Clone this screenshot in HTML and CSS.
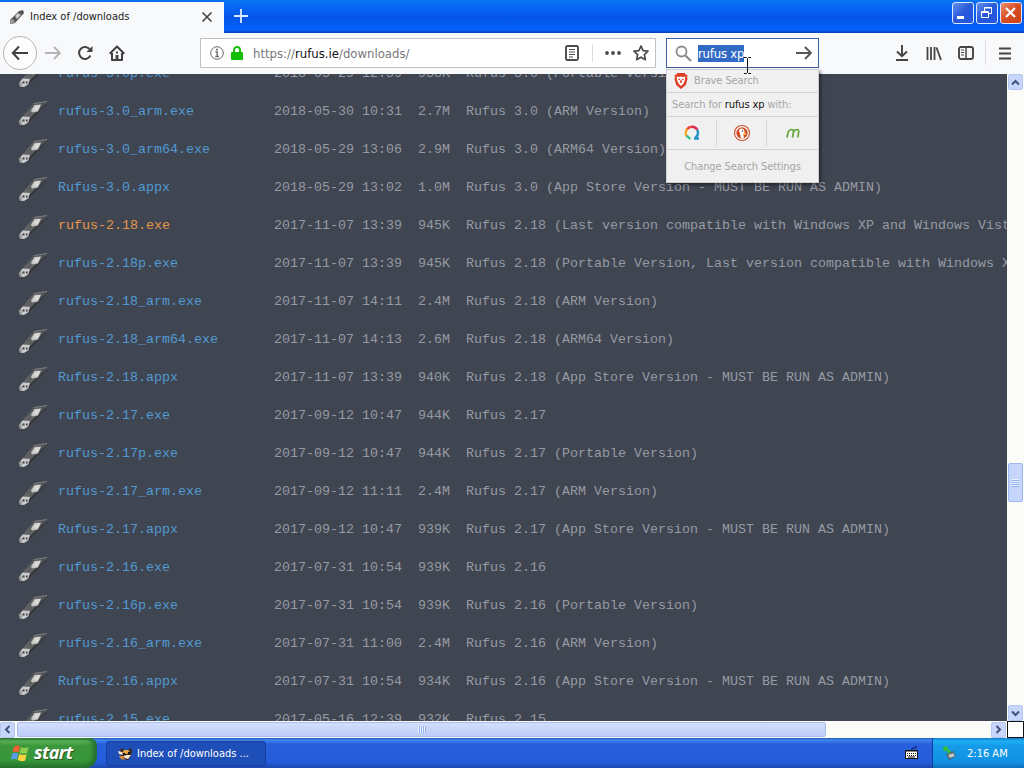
FILE: index.html
```
<!DOCTYPE html>
<html lang="en">
<head>
  <meta charset="UTF-8">
  <meta name="viewport" content="width=device-width, initial-scale=1.0">
  <title>Index of /downloads</title>
  <link rel="stylesheet" href="styles.css">
</head>
<body>
  <svg class="defs" width="0" height="0">
    <defs>
      <linearGradient id="stick" x1="0" y1="1" x2="1" y2="0">
        <stop offset="0" stop-color="#68696b"/>
        <stop offset=".55" stop-color="#5b5c5d"/>
        <stop offset="1" stop-color="#4c4f56"/>
      </linearGradient>
      <symbol id="usb" viewBox="0 0 32 28">
        <path d="M6 17 17 4 30 2.500 29 6 14 21.500 11 24z" fill="url(#stick)"/>
        <path d="M14 21.500 29 6 29.500 4 13 19 11 24z" fill="#34363a"/>
        <path d="M17 4.500 30 2.500" stroke="#7d7e80" fill="none"/>
        <path d="M14 11.500 17.500 6 24 5.500 21 12.500 15 13.500z" fill="#c6c6c3"/>
        <path d="M18 7 23.500 6 21 11 17 11.500z" fill="#dadad6"/>
        <path d="M2 22 5.500 17.500 13 18 11 23.500 7 26 3 25.500z" fill="#cbcbcb"/>
        <path d="M2 22 4 19.500 5 25.500 3 25.500z" fill="#96979a"/>
        <path d="M5.500 20.500h2v2h-2zM9 20.500h1.500v2H9z" fill="#3a3b3e"/>
      </symbol>
    </defs>
  </svg>

  <header class="titlebar">
    <div class="tab">
      <svg class="tab-icon" width="16" height="16" viewBox="0 0 16 16">
        <path d="M1 11 10 2 14 1 15 4 6 14 2 15z" fill="#555"/>
        <path d="M6 7 9 4 12 6 8 10z" fill="#ccc"/>
        <path d="M1 12 3 10 6 12 4 15 1 15z" fill="#999"/>
      </svg>
      <span class="tab-title">Index of /downloads</span>
      <svg width="12" height="12" viewBox="0 0 12 12" fill="none" stroke="#444" stroke-width="1.600"><path d="M1.500 1.500 10.500 10.500M10.500 1.500 1.500 10.500"/></svg>
    </div>
    <svg class="new-tab" width="14" height="14" viewBox="0 0 14 14" fill="none" stroke="#dcebff" stroke-width="1.800"><path d="M7 0V14M0 7H14"/></svg>
    <div class="window-buttons">
      <span class="win-btn"><svg width="19" height="19" viewBox="0 0 19 19"><path d="M4 13h7v3H4z" fill="#fff"/></svg></span>
      <span class="win-btn"><svg width="19" height="19" viewBox="0 0 19 19" fill="none" stroke="#fff"><path d="M7.500 8V4.500h7v6H12M7 5h8"/><path d="M4.500 8.500h7v6h-7zM4 9.500h8"/></svg></span>
      <span class="win-btn close"><svg width="19" height="19" viewBox="0 0 19 19" stroke="#fff" stroke-width="2.200"><path d="M5 5 14 14M14 5 5 14"/></svg></span>
    </div>
  </header>

  <nav class="toolbar">
    <span class="back"><svg width="18" height="16" viewBox="0 0 18 16" fill="none" stroke="#3f3f42" stroke-width="2"><path d="M17 8H2M8 1.500 1.800 8 8 14.500"/></svg></span>
    <svg class="forward" width="17" height="16" viewBox="0 0 17 16" fill="none" stroke="#b4b4b6" stroke-width="1.800"><path d="M0 8H15M9 2 15 8 9 14"/></svg>
    <svg class="reload" width="16" height="16" viewBox="0 0 16 16" fill="none" stroke="#444" stroke-width="2"><path d="M13 4.500A6 6 0 1 0 13.500 10.500"/><path d="M15.500 1V7H9.500z" fill="#444" stroke="none"/></svg>
    <svg class="home" width="16" height="16" viewBox="0 0 16 16" fill="none" stroke="#3f3f42" stroke-width="2"><path d="M.7 8.700 8 1.500 15.300 8.700M3 8V15H13V8" stroke-linejoin="round"/><path d="M6.500 10h3v5h-3z" fill="#444" stroke="none"/><path d="M7 6.500h2v2H7z" fill="#444" stroke="none"/></svg>

    <div class="urlbar">
      <svg width="14" height="14" viewBox="0 0 14 14" fill="none" stroke="#666"><circle cx="7" cy="7" r="6.300"/><path d="M5.500 6H7.200V10.500M5.300 10.500H9" stroke-width="1.300"/><path d="M6.200 2.800h1.600v1.600H6.200z" fill="#555" stroke="none"/></svg>
      <svg class="lock" width="12" height="14" viewBox="0 0 12 14"><path d="M3 7V4a3 3 0 0 1 6 0V7" fill="none" stroke="#12bc00" stroke-width="1.900"/><rect y="6" width="12" height="8" rx="1" fill="#12bc00"/></svg>
      <span class="url">https://<b>rufus.ie</b>/downloads/</span>
      <svg class="reader" width="14" height="16" viewBox="0 0 14 16" fill="none" stroke="#4b4b4d"><rect x="1" y="1" width="12" height="14" rx="1.500" stroke-width="1.900"/><path d="M4 4.500h6M4 7h6M4 9.500h6M4 12h4"/></svg>
      <span class="divider"></span>
      <svg class="dots" width="16" height="4" viewBox="0 0 16 4" fill="#4b4b4d"><circle cx="2" cy="2" r="1.900"/><circle cx="8" cy="2" r="1.900"/><circle cx="14" cy="2" r="1.900"/></svg>
      <svg class="star" width="16" height="16" viewBox="0 0 16 16" fill="none" stroke="#4b4b4d" stroke-width="1.700" stroke-linejoin="round"><path d="M8 1 10.100 5.600 15 6.200 11.400 9.600 12.300 14.700 8 12.200 3.700 14.700 4.600 9.600 1 6.200 5.900 5.600z"/></svg>
    </div>

    <div class="search">
      <svg width="17" height="17" viewBox="0 0 17 17" fill="none" stroke="#8b8b8d" stroke-width="1.800"><circle cx="6.500" cy="6.500" r="5"/><path d="M10.500 10.500 16 16" stroke-width="2.200"/></svg>
      <span class="query">rufus xp</span>
      <svg class="go" width="16" height="14" viewBox="0 0 16 14" fill="none" stroke="#555" stroke-width="1.900"><path d="M0 7H15M9 1 15 7 9 13"/></svg>

      <div class="popup">
        <div class="engine">
          <svg width="14" height="16" viewBox="0 0 14 16"><path d="M3.500 0h7L12 1.800 13.600 2 13 4 13.500 6 11.800 12 7 16 2.200 12 .5 6 1 4 .4 2 2 1.800z" fill="#df3d26"/><path d="M2.800 3.500 5 4 7 3.500 9 4 11.200 3.500 11 7 9.500 10.500 7 13 4.500 10.500 3 7z" fill="#fff"/><path d="M4 5.500 6.300 6.200 6 7.300 4.600 7zM10 5.500 7.700 6.200 8 7.300 9.400 7zM6.500 7h1L8 9.500 7 10.300 6 9.500z" fill="#df3d26"/></svg>
          <span>Brave Search</span>
        </div>
        <div class="search-for">Search for <b>rufus xp</b> with:</div>
        <div class="engines">
          <span><svg width="16" height="16" viewBox="0 0 16 16" fill="none" stroke-width="2.600"><path d="M3 11.500A5.800 5.800 0 0 1 3.500 3.800" stroke="#f4a928"/><path d="M3.200 4A6 6 0 0 1 8 1.800" stroke="#e9453c"/><path d="M8 1.800A6 6 0 0 1 13.400 5" stroke="#d92f55"/><path d="M13.300 5A6 6 0 0 1 11.500 12.500M10 13.500H15" stroke="#2594c8"/><path d="M2.800 10.500A6 6 0 0 0 6.500 13.700" stroke="#35c18b"/></svg></span>
          <span><svg width="16" height="16" viewBox="0 0 16 16"><circle cx="8" cy="8" r="8" fill="#ce4a24"/><circle cx="8" cy="8" r="6.300" fill="none" stroke="#fff" stroke-width="1.200"/><path d="M5 5Q6 2.800 9 3.800 11 5 10.500 8L12 9.300 9.500 10 10 13.500H7Z" fill="#fff"/><path d="M9 8.500 12.500 8.200 12 9.800 9 10z" fill="#f3b51e"/><circle cx="8.500" cy="6" r=".8" fill="#444"/></svg></span>
          <span><svg width="14" height="10" viewBox="0 0 14 10" fill="none" stroke="#62a73b" stroke-width="1.700"><path d="M1 9.500 2 4.500Q3 1.500 5.500 1.500 7.800 1.500 7.500 4L6.500 9.500M7.500 4Q8.500 1.500 11 1.500 13 1.500 12.700 4L11.800 9.500"/></svg></span>
        </div>
        <div class="settings">Change Search Settings</div>
      </div>
      <svg class="cursor" width="9" height="17" viewBox="0 0 9 17" fill="none" stroke="#111"><path d="M1 .5H3.500L4.500 1.500 5.500 .5H8M4.500 1.500V15.500M1 16.500H3.500L4.500 15.500 5.500 16.500H8"/></svg>
    </div>

    <div class="tools">
      <svg width="14" height="16" viewBox="0 0 14 16" fill="none" stroke="#444" stroke-width="1.900"><path d="M7 0V11M2 6.500 7 11.300 12 6.500M1 15H13"/></svg>
      <svg class="library" width="16" height="15" viewBox="0 0 16 15" fill="none" stroke="#444" stroke-width="1.800"><path d="M1.500 1V14M5 1V14M8.500 1V14M10.500 1.500 15 14"/></svg>
      <svg class="sidebar" width="16" height="14" viewBox="0 0 16 14" fill="none" stroke="#444" stroke-width="1.900"><rect x="1" y="1" width="14" height="12" rx="2"/><path d="M8 1V13" stroke-width="1.500"/><path d="M3 4h3M3 6.500h3M3 9h3" stroke-width="1"/></svg>
      <span class="divider"></span>
      <svg width="12" height="13" viewBox="0 0 12 13" stroke="#444" stroke-width="1.900"><path d="M0 1.500H12M0 6.500H12M0 11.500H12"/></svg>
    </div>
  </nav>

  <div class="content">
    <main class="listing" id="listing"></main>
    <div class="vscroll">
      <span class="arrow"><svg width="9" height="7" viewBox="0 0 9 7"><path d="M1 5.500 4.500 2 8 5.500"/></svg></span>
      <span class="vthumb"></span>
      <span class="arrow"><svg width="9" height="7" viewBox="0 0 9 7"><path d="M1 1.500 4.500 5 8 1.500"/></svg></span>
    </div>
  </div>
  <div class="hscroll">
    <span class="arrow"><svg width="7" height="9" viewBox="0 0 7 9"><path d="M5.500 1 2 4.500 5.500 8"/></svg></span>
    <span class="hthumb"></span>
    <span class="arrow"><svg width="7" height="9" viewBox="0 0 7 9"><path d="M1.500 1 5 4.500 1.500 8"/></svg></span>
    <span class="corner"></span>
  </div>

  <footer class="taskbar">
    <div class="start">
      <svg width="19" height="18" viewBox="0 0 19 18"><path d="M3 3Q6 .5 9 2.500L7.500 8.500Q5 7 1.500 8.500z" fill="#ef6033"/><path d="M10 3Q13 5 17.500 3L16 9Q12.500 10.500 8.500 8.800z" fill="#8fce4a"/><path d="M1.200 9.700Q4.500 8 7.200 9.700L5.700 15.500Q3 14-.2 15.500z" fill="#5a9bf0"/><path d="M8.200 10Q12 12 15.700 10.200L14.200 16.500Q10.500 18 6.700 16z" fill="#fbd342"/></svg>
      <span>start</span>
    </div>
    <div class="task">
      <svg width="16" height="14" viewBox="0 0 16 14"><path d="M2 3 4 1 6 3 10 3 13 1 14 4 13 9 10 13 6 12 3 9z" fill="#3b2a1c"/><path d="M6 3 10 3 12 5 9 7 4 6z" fill="#e8a54a"/><path d="M0 4 4 5 5 8 1 7zM5 9 9 8 13 8 10 12 7 11z" fill="#f3e7cf"/><path d="M1 9 5 9 7 13 3 12z" fill="#d98c35"/><path d="M5 6h2v2H5zM10 5h2v2h-2z" fill="#111"/></svg>
      <span>Index of /downloads ...</span>
    </div>
    <svg class="keyboard" width="13" height="14" viewBox="0 0 13 14"><path d="M7 4V2H11V0" fill="none" stroke="#0a1c60"/><path d="M0 4h13v9H0z" fill="#111"/><path d="M1 5.500h11v6.500H1z" fill="#fff"/><path d="M2 7.500h9M2 9.500h9" stroke="#111" stroke-dasharray="1 1"/><path d="M3 11h7" stroke="#111"/></svg>
    <div class="tray">
      <svg width="14" height="15" viewBox="0 0 14 15"><path d="M3 8 10 5 13 10 6 14z" fill="#53636c"/><path d="M5 9 10 7 12 10 7 12z" fill="#bdc9c7"/><path d="M0 1 5 0 4 2 8 5 6 8 3 4 1 6z" fill="#37bd35"/></svg>
      <span>2:16 AM</span>
    </div>
  </footer>

  <script>
    const files = [
      ["rufus-3.0p.exe", "2018-05-29 12:59", "938K", "Rufus 3.0 (Portable Version)"],
      ["rufus-3.0_arm.exe", "2018-05-30 10:31", "2.7M", "Rufus 3.0 (ARM Version)"],
      ["rufus-3.0_arm64.exe", "2018-05-29 13:06", "2.9M", "Rufus 3.0 (ARM64 Version)"],
      ["Rufus-3.0.appx", "2018-05-29 13:02", "1.0M", "Rufus 3.0 (App Store Version - MUST BE RUN AS ADMIN)"],
      ["rufus-2.18.exe", "2017-11-07 13:39", "945K", "Rufus 2.18 (Last version compatible with Windows XP and Windows Vista)"],
      ["rufus-2.18p.exe", "2017-11-07 13:39", "945K", "Rufus 2.18 (Portable Version, Last version compatible with Windows XP and Windows Vista)"],
      ["rufus-2.18_arm.exe", "2017-11-07 14:11", "2.4M", "Rufus 2.18 (ARM Version)"],
      ["rufus-2.18_arm64.exe", "2017-11-07 14:13", "2.6M", "Rufus 2.18 (ARM64 Version)"],
      ["Rufus-2.18.appx", "2017-11-07 13:39", "940K", "Rufus 2.18 (App Store Version - MUST BE RUN AS ADMIN)"],
      ["rufus-2.17.exe", "2017-09-12 10:47", "944K", "Rufus 2.17"],
      ["rufus-2.17p.exe", "2017-09-12 10:47", "944K", "Rufus 2.17 (Portable Version)"],
      ["rufus-2.17_arm.exe", "2017-09-12 11:11", "2.4M", "Rufus 2.17 (ARM Version)"],
      ["Rufus-2.17.appx", "2017-09-12 10:47", "939K", "Rufus 2.17 (App Store Version - MUST BE RUN AS ADMIN)"],
      ["rufus-2.16.exe", "2017-07-31 10:54", "939K", "Rufus 2.16"],
      ["rufus-2.16p.exe", "2017-07-31 10:54", "939K", "Rufus 2.16 (Portable Version)"],
      ["rufus-2.16_arm.exe", "2017-07-31 11:00", "2.4M", "Rufus 2.16 (ARM Version)"],
      ["Rufus-2.16.appx", "2017-07-31 10:54", "934K", "Rufus 2.16 (App Store Version - MUST BE RUN AS ADMIN)"],
      ["rufus-2.15.exe", "2017-05-16 12:39", "932K", "Rufus 2.15"]
    ];

    document.getElementById("listing").innerHTML = files.map(([name, date, size, info]) => `
      <div class="row">
        <svg class="usb" width="32" height="28"><use href="#usb"/></svg>
        <a class="${name === "rufus-2.18.exe" ? "active" : ""}">${name}</a>
        <span>${date}</span>
        <span>${size}</span>
        <span>${info}</span>
      </div>`).join("");
  </script>
</body>
</html>
```
FILE: styles.css
```
* {
  box-sizing: border-box;
}

body {
  margin: 0;
  width: 1024px;
  height: 768px;
  overflow: hidden;
  display: flex;
  flex-direction: column;
  font-family: "DejaVu Sans Condensed", "DejaVu Sans", sans-serif;
  font-stretch: condensed;
  font-size: 11px;
  color: #222;
}

svg {
  display: block;
  flex: none;
}

b {
  font-weight: normal;
  color: #111;
}

.defs {
  position: absolute;
}

/* title bar */
.titlebar {
  height: 33px;
  flex: none;
  display: flex;
  align-items: flex-start;
  background: linear-gradient(#0874f0, #0765f4 8px, #0455e8 18px, #0563fb 30px, #0340b4);
}

.tab {
  width: 224px;
  height: 31px;
  margin-top: 2px;
  padding: 0 11px 2px 9px;
  display: flex;
  align-items: center;
  background: #f8f9fb;
}

.tab-title {
  margin-left: 5px;
  flex: 1;
  white-space: nowrap;
}

.new-tab {
  margin: 9px 0 0 10px;
}

.window-buttons {
  margin: 2px 2px 0 auto;
  display: flex;
  gap: 2px;
}

.win-btn {
  width: 22px;
  height: 22px;
  border: 1px solid #dce8ff;
  border-radius: 3px;
  background: linear-gradient(135deg, #6690ef, #2858d8 50%, #2156dc);
}

.win-btn.close {
  background: linear-gradient(135deg, #ec8f72, #d94d22 50%, #c83f15);
}

/* navigation */
.toolbar {
  height: 41px;
  flex: none;
  display: flex;
  align-items: center;
  padding: 0 0 1px 3px;
  background: #f8f9fb;
}

.back {
  width: 34px;
  height: 34px;
  display: flex;
  align-items: center;
  justify-content: center;
  border: 1px solid #b5b5b7;
  border-radius: 50%;
  background: #fdfdfe;
}

.forward {
  margin-left: 8px;
}

.reload {
  margin-left: 15px;
}

.home {
  margin-left: 16px;
}

.urlbar {
  width: 456px;
  height: 30px;
  margin-left: 75px;
  padding: 0 6px 0 9px;
  display: flex;
  align-items: center;
  border: 1px solid #c2c2c4;
  background: #fff;
}

.lock {
  margin-left: 7px;
}

.url {
  flex: 1;
  margin-left: 10px;
  font-size: 13px;
  color: #77777a;
}

.divider {
  width: 1px;
  height: 24px;
  background: #dcdcde;
}

.urlbar .divider {
  height: 18px;
  margin: 0 12px 0 13px;
}

.star {
  margin-left: 12px;
}

.search {
  position: relative;
  width: 153px;
  height: 30px;
  margin-left: 10px;
  padding: 0 6px 0 8px;
  display: flex;
  align-items: center;
  border: 1px solid #3f5ca0;
  background: #fff;
}

.query {
  height: 17px;
  margin-left: 6px;
  line-height: 17px;
  font-size: 13px;
  letter-spacing: -0.2px;
  white-space: nowrap;
  color: #fff;
  background: #316ac5;
}

.go {
  margin-left: auto;
}

.cursor {
  position: absolute;
  left: 76px;
  top: 18px;
  z-index: 3;
}

.popup {
  position: absolute;
  left: -1px;
  top: 30px;
  width: 153px;
  height: 114px;
  z-index: 2;
  border: 1px solid #d0d0d0;
  background: #f0f0f0;
  box-shadow: 2px 2px 3px rgba(0, 0, 0, 0.45);
  color: #a5a5a5;
  letter-spacing: -0.1px;
  white-space: nowrap;
}

.engine {
  height: 23px;
  padding: 0 0 1px 7px;
  display: flex;
  align-items: center;
  gap: 6px;
  border-bottom: 1px solid #d3d3d3;
}

.search-for {
  height: 24px;
  padding-left: 5px;
  line-height: 24px;
  border-bottom: 1px solid #d3d3d3;
}

.engines {
  height: 33px;
  display: grid;
  grid-template-columns: 50px 50px 51px;
  border-bottom: 1px solid #d3d3d3;
}

.engines span {
  margin: 3px 0;
  display: flex;
  align-items: center;
  justify-content: center;
  border-right: 1px solid #d8d8d8;
}

.engines span:last-child {
  border-right: 0;
}

.settings {
  line-height: 33px;
  text-align: center;
}

.tools {
  margin-left: 76px;
  display: flex;
  align-items: center;
}

.library {
  margin-left: 17px;
}

.sidebar {
  margin-left: 16px;
}

.tools .divider {
  margin: 0 13px 0 11px;
}

/* file list */
.content {
  height: 647px;
  flex: none;
  display: flex;
}

.listing {
  width: 1007px;
  overflow: hidden;
  background: #404552;
  font-family: "Liberation Mono", "Courier New", monospace;
  font-size: 13.333px;
  color: #969aa2;
}

.row {
  height: 38px;
  padding-left: 17px;
  display: grid;
  grid-template-columns: 41px 216px 144px 48px max-content;
  align-items: center;
  white-space: pre;
}

.row:first-child {
  margin-top: -20px;
}

.row a {
  color: #519bd2;
}

.row a.active {
  color: #e59749;
}

.usb {
  margin-top: 4px;
}

/* scrollbars */
.vscroll {
  width: 17px;
  display: flex;
  flex-direction: column;
  align-items: center;
  background: #fbfbf7;
}

.arrow {
  width: 15px;
  height: 16px;
  flex: none;
  display: flex;
  align-items: center;
  justify-content: center;
  border: 1px solid #b4c7f2;
  border-radius: 2px;
  background: #c8d6fb;
}

.arrow path {
  fill: none;
  stroke: #3f557f;
  stroke-width: 2;
}

.vthumb {
  width: 15px;
  height: 39px;
  margin: 373px 0 auto;
  border: 1px solid #9db8ee;
  border-radius: 2px;
  background: repeating-linear-gradient(#eef4ff 0 1px, #8fadeb 1px 2px) center / 7px 8px no-repeat, #c5d5fc;
}

.hscroll {
  height: 17px;
  flex: none;
  display: flex;
  align-items: center;
  background: #fbfbf7;
}

.hthumb {
  width: 809px;
  height: 15px;
  margin: 0 auto 0 2px;
  border: 1px solid #a9bdec;
  border-radius: 2px;
  background: repeating-linear-gradient(90deg, #eef4ff 0 1px, #8fadeb 1px 2px) center / 8px 7px no-repeat, linear-gradient(#d3defd, #bdcdf8);
}

.corner {
  width: 17px;
  height: 17px;
  margin-left: 1px;
  border: 1px solid #111;
  background: #fff;
}

/* taskbar */
.taskbar {
  height: 30px;
  flex: none;
  display: flex;
  align-items: center;
  background: linear-gradient(#2456b4, #3f87ee 2px, #285fdc 6px, #245cdb 24px, #1c47ac);
  color: #fff;
}

.start {
  width: 97px;
  height: 30px;
  padding-left: 11px;
  display: flex;
  align-items: center;
  gap: 4px;
  border-radius: 0 8px 12px 0;
  background: linear-gradient(#2f7a30, #5db45b 3px, #3a963a 8px, #37983a 22px, #24752a);
  box-shadow: inset -4px 0 5px #256c30;
  font: italic bold 18px "Open Sans", sans-serif;
  letter-spacing: -0.6px;
  text-shadow: 1px 1px 1px #24521f;
}

.start span {
  margin-top: -2px;
}

.task {
  width: 160px;
  height: 25px;
  margin: 1px 0 0 9px;
  padding-left: 11px;
  display: flex;
  align-items: center;
  gap: 3px;
  border: 1px solid #173f9f;
  border-radius: 3px;
  background: #1e4fb8;
  white-space: nowrap;
}

.keyboard {
  margin-left: auto;
}

.tray {
  width: 92px;
  height: 30px;
  margin-left: 14px;
  padding-left: 10px;
  display: flex;
  align-items: center;
  gap: 10px;
  border-left: 1px solid #0c3f9c;
  background: linear-gradient(#1679c9, #1cb0f2 3px, #159ae9 8px, #1291e4 24px, #0f6fbd);
}
```
